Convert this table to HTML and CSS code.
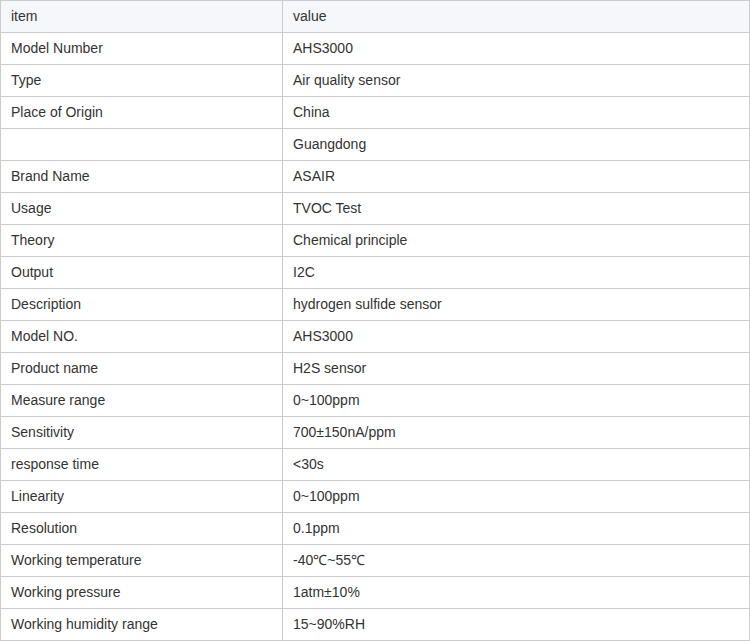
FILE: index.html
```html
<!DOCTYPE html>
<html>
<head>
<meta charset="utf-8">
<link rel="stylesheet" href="styles.css">
</head>
<body>
<table class="spec">
<colgroup><col class="c1"><col class="c2"></colgroup>
<thead>
<tr><th>item</th><th>value</th></tr>
</thead>
<tbody>
<tr><td>Model Number</td><td>AHS3000</td></tr>
<tr><td>Type</td><td>Air quality sensor</td></tr>
<tr><td>Place of Origin</td><td>China</td></tr>
<tr><td></td><td>Guangdong</td></tr>
<tr><td>Brand Name</td><td>ASAIR</td></tr>
<tr><td>Usage</td><td>TVOC Test</td></tr>
<tr><td>Theory</td><td>Chemical principle</td></tr>
<tr><td>Output</td><td>I2C</td></tr>
<tr><td>Description</td><td>hydrogen sulfide sensor</td></tr>
<tr><td>Model NO.</td><td>AHS3000</td></tr>
<tr><td>Product name</td><td>H2S sensor</td></tr>
<tr><td>Measure range</td><td>0~100ppm</td></tr>
<tr><td>Sensitivity</td><td>700±150nA/ppm</td></tr>
<tr><td>response time</td><td>&lt;30s</td></tr>
<tr><td>Linearity</td><td>0~100ppm</td></tr>
<tr><td>Resolution</td><td>0.1ppm</td></tr>
<tr><td>Working temperature</td><td>-40℃~55℃</td></tr>
<tr><td>Working pressure</td><td>1atm±10%</td></tr>
<tr><td>Working humidity range</td><td>15~90%RH</td></tr>
</tbody>
</table>
</body>
</html>
```
FILE: styles.css
```css
html, body {
  margin: 0;
  padding: 0;
  background: #fff;
}
.spec {
  width: 750px;
  border-collapse: collapse;
  table-layout: fixed;
  font-family: "Liberation Sans", Arial, sans-serif;
  font-size: 14px;
  color: #333;
}
.spec .c1 { width: 282px; }
.spec th,
.spec td {
  border: 1px solid #ccc;
  height: 32px;
  padding: 0 10px 2px;
  text-align: left;
  font-weight: normal;
  vertical-align: middle;
  box-sizing: border-box;
  line-height: 16px;
}
.spec th {
  background: #f5f7fa;
}
```
